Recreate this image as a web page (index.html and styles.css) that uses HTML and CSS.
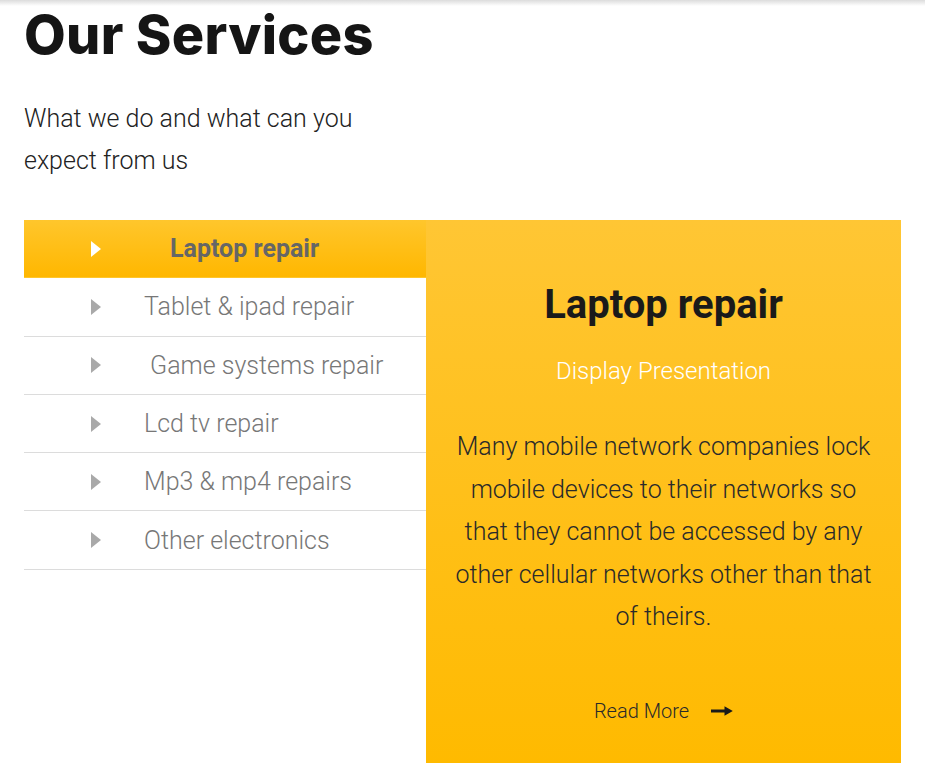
FILE: index.html
```html
<!DOCTYPE html>
<html lang="en">
<head>
<meta charset="utf-8">
<title>Our Services</title>
<link rel="stylesheet" href="styles.css">
</head>
<body>
<div class="topshade"></div>
<section class="services">
  <h1 class="title">Our Services</h1>
  <p class="subtitle">What we do and what can you expect from us</p>
  <div class="board">
    <ul class="tabs">
      <li class="tab active"><span class="caret"></span><span class="label">Laptop repair</span></li>
      <li class="tab"><span class="caret"></span><span class="label">Tablet &amp; ipad repair</span></li>
      <li class="tab"><span class="caret"></span><span class="label">&nbsp;Game systems repair</span></li>
      <li class="tab"><span class="caret"></span><span class="label">Lcd tv repair</span></li>
      <li class="tab"><span class="caret"></span><span class="label">Mp3 &amp; mp4 repairs</span></li>
      <li class="tab"><span class="caret"></span><span class="label">Other electronics</span></li>
    </ul>
    <div class="panel">
      <h2 class="panel-title">Laptop repair</h2>
      <p class="panel-sub">Display Presentation</p>
      <p class="panel-text">Many mobile network companies lock mobile devices to their networks so that they cannot be accessed by any other cellular networks other than that of theirs.</p>
      <a class="more" href="#">Read More
        <svg class="arrow" width="22" height="10" viewBox="0 0 22 10" aria-hidden="true"><path d="M0 3.4h13.5V0.2L21.8 5 13.5 9.8V6.6H0z" fill="#1a1a1a"/></svg>
      </a>
    </div>
  </div>
</section>
</body>
</html>
```
FILE: styles.css
```css
* { box-sizing: border-box; }
html, body { margin: 0; padding: 0; background: #fff; }
body { font-family: Roboto, "Liberation Sans", sans-serif; }
.topshade { height: 6px; background: linear-gradient(#dcdcdc, #ffffff); }
.services { padding: 0 24px; }
.title {
  margin: 0;
  font-family: Inter, "Open Sans", sans-serif;
  font-weight: 800;
  font-size: 54px;
  line-height: 58px;
  color: #151515;
  letter-spacing: 0.3px;
}
.subtitle {
  margin: 34px 0 0;
  width: 360px;
  font-weight: 300;
  font-size: 25px;
  line-height: 42px;
  color: #222;
}
.board { display: flex; margin-top: 38px; width: 877px; }
.tabs { list-style: none; margin: 0; padding: 0; width: 402px; flex: none; }
.tab {
  display: flex; align-items: center;
  height: 58.3px;
  padding-left: 67px;
  border-bottom: 1px solid #dcdcdc;
  font-size: 25px; font-weight: 300; color: #777;
}
.caret {
  width: 0; height: 0;
  border-top: 8px solid transparent;
  border-bottom: 8px solid transparent;
  border-left: 10px solid #a9a9a9;
  margin-right: 43px;
}
.tab.active {
  background: linear-gradient(#ffc62c, #ffb700);
  border-bottom-color: transparent;
  font-weight: 700; color: #666;
}
.tab.active .caret { border-left-color: #fff; }
.tab.active .label { margin-left: 26px; }
.panel {
  width: 475px; height: 543px;
  background: linear-gradient(#ffc634, #ffba00);
  text-align: center;
  padding: 61px 28px 0;
}
.panel-title { margin: 0; font-size: 40px; font-weight: 700; line-height: 48px; color: #1a1a1a; }
.panel-sub { margin: 27px 0 0; font-size: 24px; font-weight: 300; color: #fff; line-height: 30px; }
.panel-text { margin: 40px 0 0; font-size: 25px; font-weight: 300; line-height: 42.5px; color: #2a2a2a; }
.more {
  display: inline-flex; align-items: center; gap: 22px;
  margin-top: 60px;
  font-size: 20px; font-weight: 300; color: #2a2a2a; text-decoration: none;
}
.arrow { display: block; }
```
